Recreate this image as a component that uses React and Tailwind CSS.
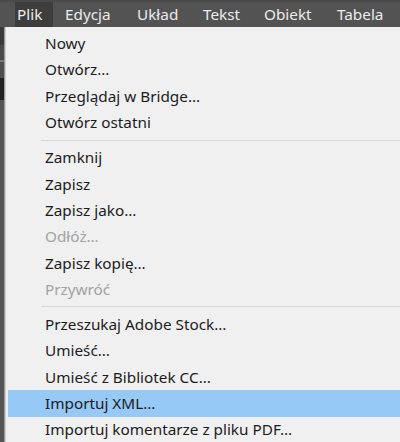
const barItems = [
  { label: "Plik", box: "w-[38px] pl-[2px] bg-[#3d3d3d]" },
  { label: "Edycja", box: "w-[72px] pl-[12px]" },
  { label: "Układ", box: "w-[66px] pl-[12px]" },
  { label: "Tekst", box: "w-[61px] pl-[12px]" },
  { label: "Obiekt", box: "w-[73px] pl-[12px]" },
  { label: "Tabela", box: "flex-1 pl-[12px]" },
];

const groups = [
  [
    { label: "Nowy" },
    { label: "Otwórz…" },
    { label: "Przeglądaj w Bridge…" },
    { label: "Otwórz ostatni" },
  ],
  [
    { label: "Zamknij" },
    { label: "Zapisz" },
    { label: "Zapisz jako…" },
    { label: "Odłóż…", disabled: true },
    { label: "Zapisz kopię…" },
    { label: "Przywróć", disabled: true },
  ],
  [
    { label: "Przeszukaj Adobe Stock…" },
    { label: "Umieść…" },
    { label: "Umieść z Bibliotek CC…" },
    { label: "Importuj XML…", active: true },
    { label: "Importuj komentarze z pliku PDF…" },
  ],
];

function MenuRow({ item }) {
  let color = "text-[#1c1c1c]";
  if (item.disabled) color = "text-[#a3a3a3]";
  return (
    <div
      className={
        "h-[26.3px] flex items-center pl-[37px] whitespace-nowrap " +
        color +
        (item.active ? " bg-[#97c9f7]" : "")
      }
    >
      {item.label}
    </div>
  );
}

function Separator() {
  return (
    <div className="h-[9px] pt-[4px] pl-[33px]">
      <div className="h-px bg-[#d6d6d6]" />
    </div>
  );
}

export default function App() {
  return (
    <div
      className="w-[400px] h-[442px] overflow-hidden bg-[#f0f0f0] flex flex-col text-[15.3px]"
      style={{ fontFamily: '"Noto Sans", "Open Sans", sans-serif' }}
    >
      {/* top menu bar */}
      <div className="h-[27px] shrink-0 bg-[#535353] border-t-2 border-[#4a4a4a] flex pl-[15px] text-[#ececec]">
        {barItems.map((b) => (
          <div key={b.label} className={"h-full flex items-center " + b.box}>
            {b.label}
          </div>
        ))}
      </div>

      <div className="flex flex-1 min-h-0">
        {/* strip of the window behind */}
        <div className="w-[4px] flex flex-col bg-[#545454]">
          <div className="h-[18px] bg-[#3a3a3a]" />
          <div className="h-[15px] bg-[#4a4a4a]" />
          <div className="h-[2px] bg-[#7a7a7a]" />
          <div className="h-[16px] bg-[#4d4d4d]" />
          <div className="h-[22px] bg-[#222222]" />
          <div className="flex-1 bg-[#555555]" />
        </div>
        <div className="w-px bg-[#9a9a9a]" />
        <div className="w-px bg-[#cfcfcf]" />

        {/* dropdown */}
        <div className="flex-1 pt-[3.5px] pl-[2px]">
          {groups.map((g, gi) => (
            <div key={gi}>
              {gi > 0 && <Separator />}
              {g.map((item) => (
                <MenuRow key={item.label} item={item} />
              ))}
            </div>
          ))}
        </div>
      </div>
    </div>
  );
}
